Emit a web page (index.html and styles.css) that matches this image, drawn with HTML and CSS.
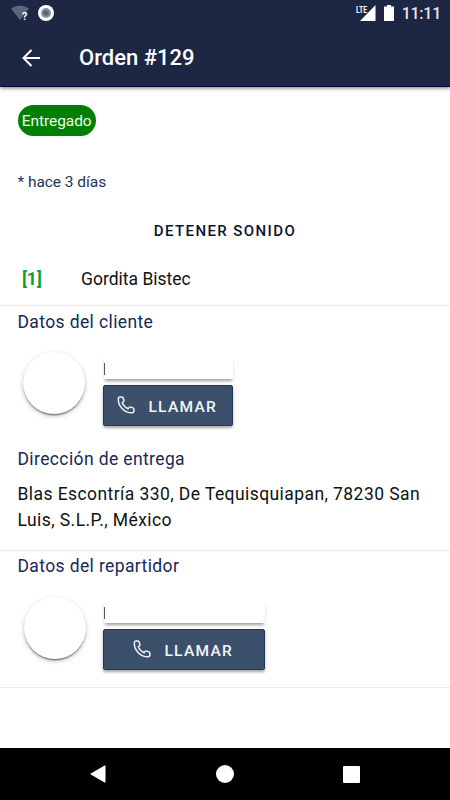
FILE: index.html
```html
<!DOCTYPE html>
<html lang="es">
<head>
<meta charset="utf-8">
<title>Orden #129</title>
<link rel="stylesheet" href="styles.css">
</head>
<body>
<div class="screen">
  <header class="top">
    <div class="status">
      <svg class="wifi" width="20" height="16" viewBox="0 0 20 16"><path d="M0 3.6Q9 -2.8 18 3.6L9 15z" fill="#5c6580"/><text x="11" y="14.5" class="question">?</text></svg>
      <svg class="record" width="16" height="16" viewBox="0 0 16 16"><circle cx="8" cy="8" r="8" fill="#fff"/><circle cx="8" cy="8" r="5" fill="#8a90a3"/><circle cx="8" cy="8" r="2.8" fill="#5d647c"/></svg>
      <svg class="signal" width="21" height="17" viewBox="0 0 21 17"><path d="M19.5 0v16H4z" fill="#fff"/><text x="0" y="7.5" class="lte" textLength="11" lengthAdjust="spacingAndGlyphs">LTE</text></svg>
      <svg class="battery" width="10" height="16" viewBox="0 0 10 16"><path d="M3 0h4v1.5h3V16H0V1.5h3z" fill="#fff"/></svg>
      <span class="clock">11:11</span>
    </div>
    <div class="appbar">
      <svg class="back" width="18" height="18" viewBox="0 0 18 18"><path d="M18 9H1.5M9.5 1L1.5 9l8 8" fill="none" stroke="#fff" stroke-width="2"/></svg>
      <h1>Orden #129</h1>
    </div>
  </header>
  <main>
    <span class="badge">Entregado</span>
    <p class="ago">* hace 3 días</p>
    <button class="stop">DETENER SONIDO</button>
    <div class="item"><b>[1]</b><span>Gordita Bistec</span></div>
    <section class="client">
      <h2>Datos del cliente</h2>
      <div class="person">
        <div class="avatar"></div>
        <div class="contact">
          <div class="name"></div>
          <button class="call"><svg width="18" height="18" viewBox="0 0 18 18"><path d="M1.3 3.2C1.3 1.8 2 1.1 3.2 1.1H4.8Q5.8 1.1 6.1 2L6.9 4.3Q7.2 5.3 6.4 5.9L5.2 6.8C6.4 9.6 8.4 11.6 11.2 12.8L12.1 11.6Q12.7 10.8 13.7 11.1L16 11.9Q16.9 12.2 16.9 13.2V14.8C16.9 16.1 16.2 16.8 14.8 16.8C7.6 16.8 1.3 10.4 1.3 3.2z"/></svg><span>LLAMAR</span></button>
        </div>
      </div>
      <h2 class="address-title">Dirección de entrega</h2>
      <p class="address">Blas Escontría 330, De Tequisquiapan, 78230 San<br>Luis, S.L.P., México</p>
    </section>
    <section class="courier">
      <h2>Datos del repartidor</h2>
      <div class="person">
        <div class="avatar"></div>
        <div class="contact">
          <div class="name"></div>
          <button class="call"><svg width="18" height="18" viewBox="0 0 18 18"><path d="M1.3 3.2C1.3 1.8 2 1.1 3.2 1.1H4.8Q5.8 1.1 6.1 2L6.9 4.3Q7.2 5.3 6.4 5.9L5.2 6.8C6.4 9.6 8.4 11.6 11.2 12.8L12.1 11.6Q12.7 10.8 13.7 11.1L16 11.9Q16.9 12.2 16.9 13.2V14.8C16.9 16.1 16.2 16.8 14.8 16.8C7.6 16.8 1.3 10.4 1.3 3.2z"/></svg><span>LLAMAR</span></button>
        </div>
      </div>
    </section>
  </main>
  <nav>
    <svg width="16" height="18" viewBox="0 0 16 18"><path d="M15 .8v16.4L.8 9z" fill="#fff" stroke="#fff" stroke-linejoin="round"/></svg>
    <svg width="18" height="18" viewBox="0 0 18 18"><circle cx="9" cy="9" r="9" fill="#fff"/></svg>
    <svg width="17" height="17" viewBox="0 0 17 17"><rect width="17" height="17" rx="1" fill="#fff"/></svg>
  </nav>
</div>
</body>
</html>
```

FILE: styles.css
```css
* { box-sizing: border-box; }
body { margin: 0; font-family: Roboto, "Liberation Sans", sans-serif; background: #fff; }
h1, h2, p { margin: 0; font-weight: 400; }
button { border: 0; padding: 0; background: none; font: inherit; }
.screen { width: 450px; height: 800px; display: flex; flex-direction: column; overflow: hidden; }

.top { height: 87px; flex: none; background: #1d2642; border-bottom: 1px solid #090d3c; box-shadow: 0 1px 4px rgba(0,0,0,.55); color: #fff; }
.status { height: 28px; display: flex; align-items: flex-start; padding: 5px 9px 0 11px; }
.wifi { margin-right: 7px; }
.question { font: 700 11px Roboto, sans-serif; fill: #fff; }
.signal { margin-left: auto; margin-right: 7px; }
.lte { font: 700 9px Roboto, sans-serif; fill: #fff; }
.battery { margin-right: 8px; }
.clock { font-size: 16px; font-weight: 500; line-height: 18px; letter-spacing: -.25px; color: #e5e7ec; }
.appbar { height: 59px; display: flex; align-items: center; padding-left: 22px; }
.back { margin-right: 39px; }
h1 { font-size: 22px; font-weight: 500; line-height: 28px; }

main { flex: 1; padding-top: 18px; display: flex; flex-direction: column; }
.badge { width: 78.5px; height: 31px; margin-left: 17.5px; border-radius: 16px; background: #008000; color: #f2f8f2; font-size: 15.5px; letter-spacing: -.08px; line-height: 33px; text-align: center; }
.ago { height: 20px; margin: 36px 0 0 17.5px; font-size: 15.5px; line-height: 20px; letter-spacing: -.05px; color: #233358; }
.stop { height: 24px; margin-top: 27px; font-size: 15px; font-weight: 500; line-height: 24px; letter-spacing: 1.4px; color: #0b1230; }
.item { height: 54px; margin-top: 8px; display: flex; align-items: center; padding-left: 22px; font-size: 17.5px; color: #111; }
.item b { width: 59px; color: #109c38; }
.item b, .item span { padding-top: 1px; }
section { padding-left: 17.5px; border-top: 1px solid #ebebeb; }
h2 { font-size: 17.5px; line-height: 24px; letter-spacing: .38px; color: #172957; }
.client { height: 245px; padding-top: 4px; }
.courier { height: 138px; padding-top: 3px; border-bottom: 1px solid #ebebeb; }
.person { display: flex; padding-left: 5.5px; }
.avatar { width: 62px; height: 62px; margin-top: 18px; border-radius: 50%; background: #fff; box-shadow: 0 2px 2px -1px rgba(0,0,0,.6), 0 2px 5px rgba(0,0,0,.22); }
.contact { margin: 23px 0 0 18px; width: 129.5px; }
.name { height: 22px; margin-left: 1px; background: linear-gradient(#505969, #505969) 0 6px / 1px 12px no-repeat #fff; box-shadow: 0 3px 3px -1px rgba(0,0,0,.38); }
.call { width: 100%; height: 41px; margin-top: 6px; display: flex; align-items: center; justify-content: center; gap: 13px; border-radius: 2px; border: 1px solid #22375c; background: #3c506b; color: #f4f6f9; font-size: 15.5px; line-height: 20px; font-weight: 500; letter-spacing: 1.3px; padding-right: 1px; box-shadow: 0 2px 3px rgba(0,0,0,.35); }
.call svg { fill: none; stroke: #eef1f6; stroke-width: 1.5; stroke-linejoin: round; position: relative; top: -1px; }
.call span { padding-top: 2px; }
.address-title { margin-top: 21px; }
.address { margin-top: 10px; font-size: 17.5px; line-height: 26px; letter-spacing: .42px; color: #111; }
.courier .avatar { margin-left: 1px; margin-top: 19px; }
.courier .contact { width: 161.5px; margin-top: 23px; margin-left: 17px; }

nav { height: 52px; flex: none; background: #000; display: flex; align-items: center; justify-content: space-between; padding: 0 90px; }
```
